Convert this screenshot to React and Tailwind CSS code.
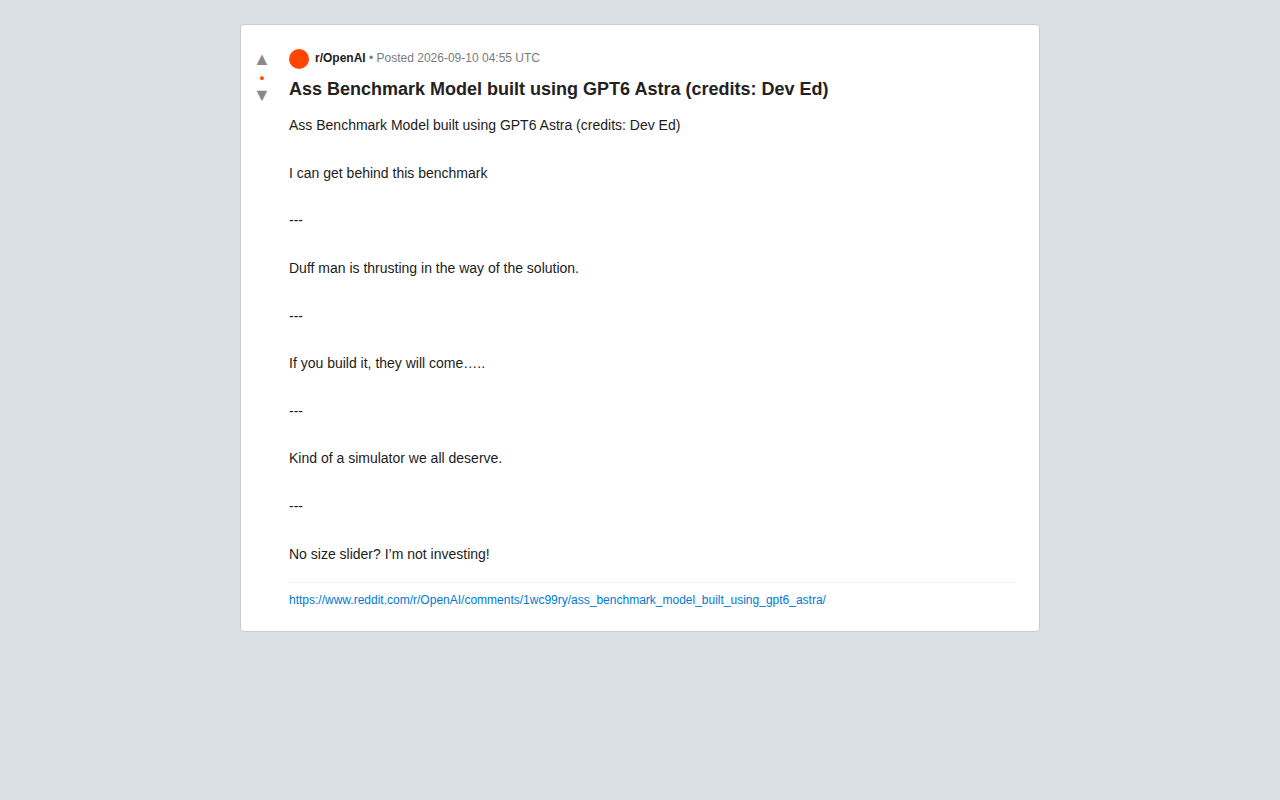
const paragraphs = [
  "Ass Benchmark Model built using GPT6 Astra (credits: Dev Ed)",
  "I can get behind this benchmark",
  "---",
  "Duff man is thrusting in the way of the solution.",
  "---",
  "If you build it, they will come…..",
  "---",
  "Kind of a simulator we all deserve.",
  "---",
  "No size slider? I’m not investing!",
];

const link = "https://www.reddit.com/r/OpenAI/comments/1wc99ry/ass_benchmark_model_built_using_gpt6_astra/";

function Votes() {
  return (
    <div className="flex w-[26px] shrink-0 flex-col items-center text-[#878a8c]">
      <button type="button" aria-label="Upvote" className="text-lg leading-5">▲</button>
      <span className="text-[13px] leading-[18px] font-bold text-[#ff4500]">•</span>
      <button type="button" aria-label="Downvote" className="text-lg leading-4">▼</button>
    </div>
  );
}

export default function App() {
  return (
    <div className="min-h-screen bg-[#dae0e6] p-6 font-['Liberation_Sans',Arial,sans-serif] text-[#1c1c1c]">
      <article className="mx-auto flex max-w-[800px] gap-3.5 rounded border border-[#cccccc] bg-white py-6 pr-6 pl-2">
        <Votes />
        <div className="min-w-0 flex-1">
          <header className="flex h-5 items-start gap-1.5 text-xs text-[#787c7e]">
            <span className="size-5 rounded-full bg-[#ff4500]" />
            <p className="leading-[18px]"><strong className="font-bold text-[#1c1c1c]">r/OpenAI</strong> • Posted 2026-09-10 04:55 UTC</p>
          </header>
          <h1 className="mt-2 text-lg leading-[1.4] font-bold text-[#222222]">
            Ass Benchmark Model built using GPT6 Astra (credits: Dev Ed)
          </h1>
          <div className="mt-3 text-sm leading-[1.7] whitespace-pre-line">{paragraphs.join("\n\n")}</div>
          <footer className="mt-4 border-t border-[#edeff1] pt-2.5 text-xs leading-[14px]">
            <a href={link} className="text-[#0079d3]">{link}</a>
          </footer>
        </div>
      </article>
    </div>
  );
}
